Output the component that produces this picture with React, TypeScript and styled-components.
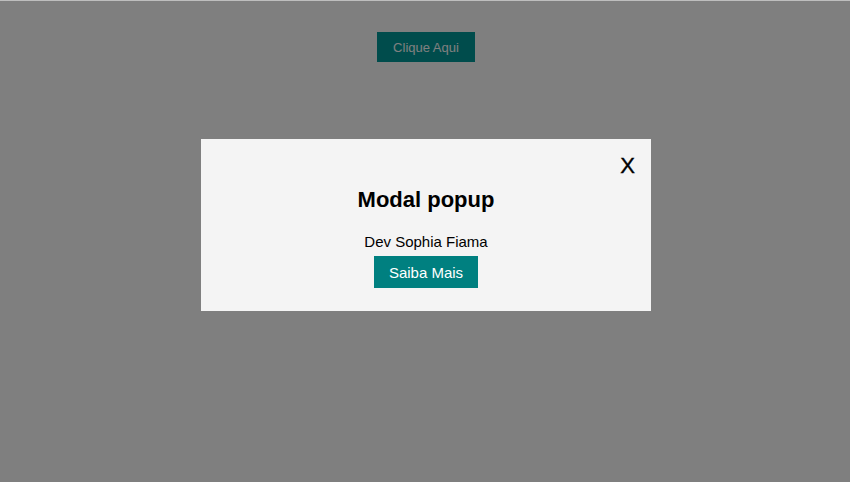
import React, { useState } from "react";
import styled, { createGlobalStyle } from "styled-components";

const GlobalStyle = createGlobalStyle`
  html, body {
    margin: 0;
    padding: 0;
    background: #ffffff;
    font-family: "Liberation Sans", Arial, sans-serif;
  }
`;

const Page = styled.div`
  min-height: 100vh;
  display: flex;
  flex-direction: column;
  align-items: center;
  padding-top: 32px;
  box-sizing: border-box;
`;

const TriggerButton = styled.button`
  height: 30px;
  width: 98px;
  margin-left: 2px;
  padding: 0;
  border: none;
  background: #009999;
  color: #ffffff;
  font-family: "Liberation Sans", Arial, sans-serif;
  font-size: 13px;
  cursor: pointer;
`;

const Overlay = styled.div`
  position: fixed;
  inset: 0;
  background: rgba(0, 0, 0, 0.5);
  border-top: 1px solid rgba(190, 190, 190, 1);
  display: flex;
  justify-content: center;
  align-items: flex-start;
  padding-top: 138px;
  box-sizing: border-box;
`;

const Modal = styled.div`
  position: relative;
  width: 450px;
  margin-left: 2px;
  box-sizing: border-box;
  background: #f4f4f4;
  display: flex;
  flex-direction: column;
  align-items: center;
  padding: 48px 0 23px;
  text-align: center;
`;

const CloseButton = styled.button`
  position: absolute;
  top: 14px;
  right: 16px;
  padding: 0;
  border: none;
  background: transparent;
  color: #000000;
  font-family: "Liberation Sans", Arial, sans-serif;
  font-size: 22px;
  line-height: 25px;
  -webkit-text-stroke: 0.4px #000000;
  cursor: pointer;
`;

const Title = styled.h2`
  margin: 0;
  font-size: 22px;
  line-height: 25px;
  font-weight: bold;
  color: #000000;
`;

const Subtitle = styled.p`
  margin: 21px 0 0;
  font-size: 15px;
  line-height: 17px;
  color: #000000;
`;

const ActionButton = styled.button`
  margin-top: 6px;
  height: 32px;
  padding: 0 15px;
  border: none;
  background: #008080;
  color: #ffffff;
  font-family: "Liberation Sans", Arial, sans-serif;
  font-size: 15px;
  cursor: pointer;
`;

export default function App() {
  const [open, setOpen] = useState(true);
  return (
    <>
      <GlobalStyle />
      <Page>
        <TriggerButton onClick={() => setOpen(true)}>Clique Aqui</TriggerButton>
      </Page>
      {open && (
        <Overlay>
          <Modal>
            <CloseButton onClick={() => setOpen(false)}>X</CloseButton>
            <Title>Modal popup</Title>
            <Subtitle>Dev Sophia Fiama</Subtitle>
            <ActionButton>Saiba Mais</ActionButton>
          </Modal>
        </Overlay>
      )}
    </>
  );
}
